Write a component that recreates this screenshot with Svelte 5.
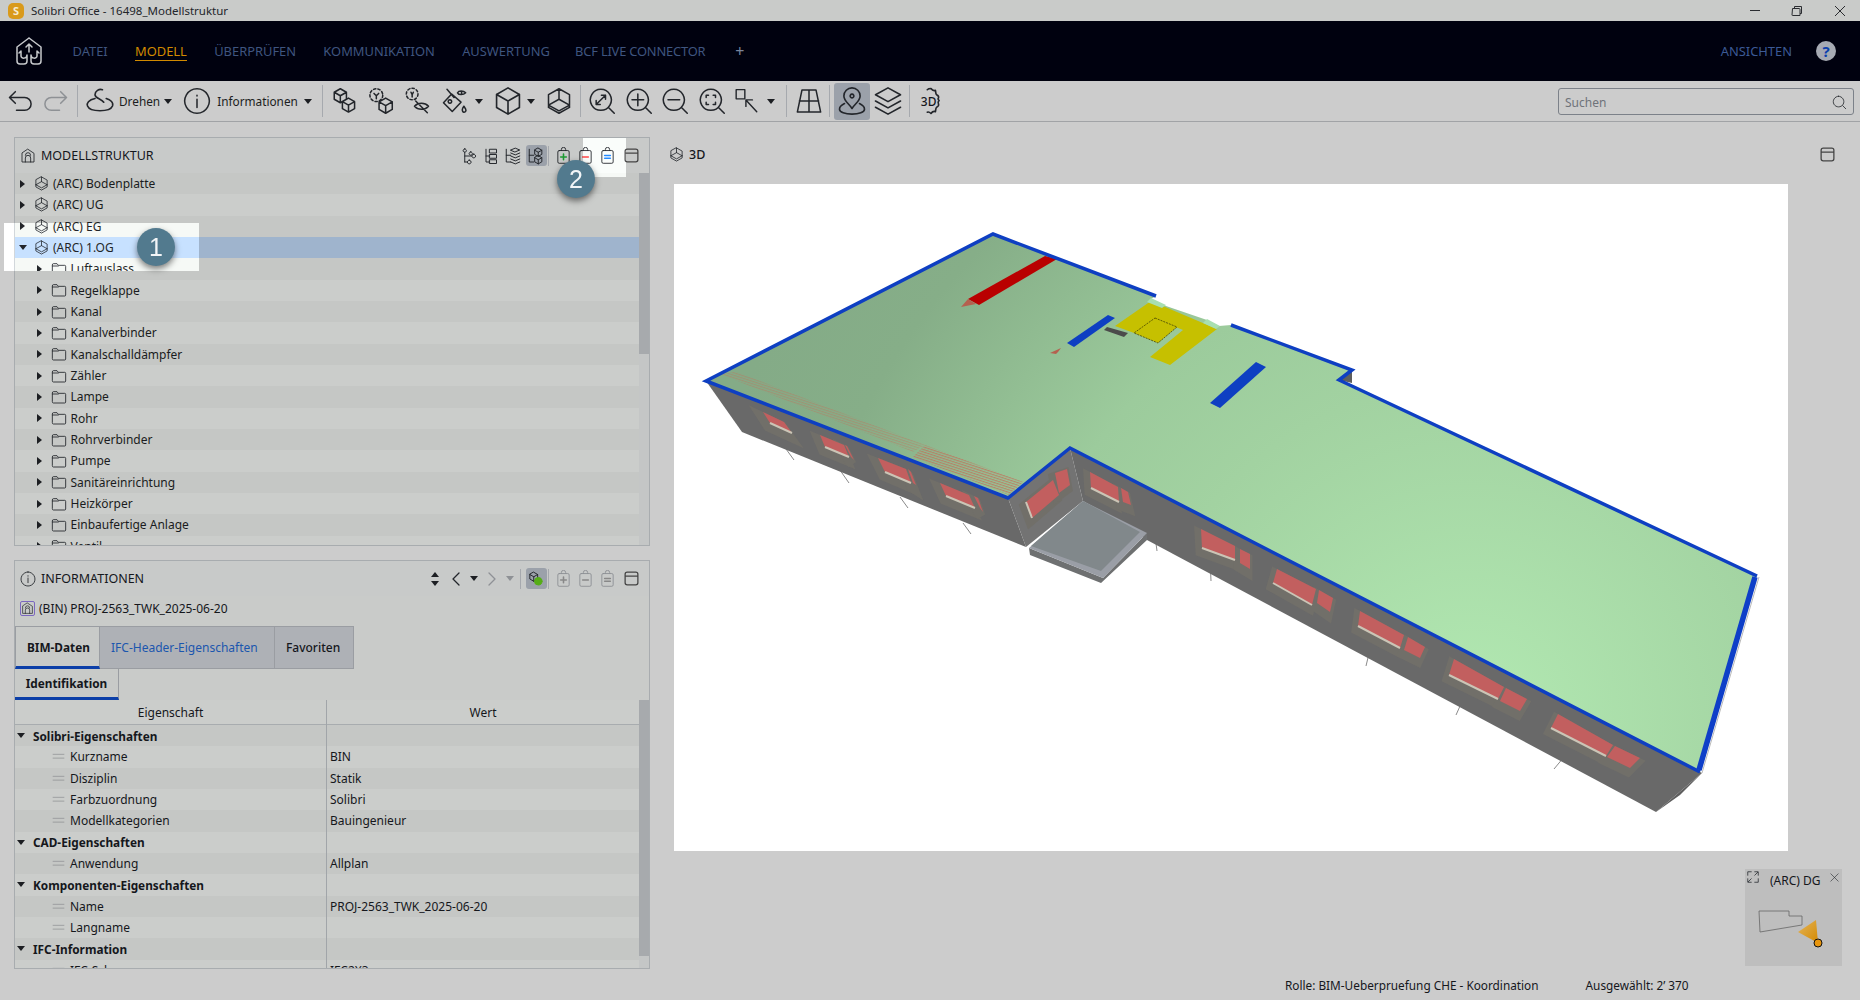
<script>
  const nav = ['DATEI', 'MODELL', 'ÜBERPRÜFEN', 'KOMMUNIKATION', 'AUSWERTUNG', 'BCF LIVE CONNECTOR'];
  const roots = ['(ARC) Bodenplatte', '(ARC) UG', '(ARC) EG', '(ARC) 1.OG'];
  const folders = ['Luftauslass', 'Regelklappe', 'Kanal', 'Kanalverbinder', 'Kanalschalldämpfer', 'Zähler', 'Lampe', 'Rohr', 'Rohrverbinder', 'Pumpe', 'Sanitäreinrichtung', 'Heizkörper', 'Einbaufertige Anlage', 'Ventil'];
  const props = [
    { group: 'Solibri-Eigenschaften' },
    { k: 'Kurzname', v: 'BIN' },
    { k: 'Disziplin', v: 'Statik' },
    { k: 'Farbzuordnung', v: 'Solibri' },
    { k: 'Modellkategorien', v: 'Bauingenieur' },
    { group: 'CAD-Eigenschaften' },
    { k: 'Anwendung', v: 'Allplan' },
    { group: 'Komponenten-Eigenschaften' },
    { k: 'Name', v: 'PROJ-2563_TWK_2025-06-20' },
    { k: 'Langname', v: '' },
    { group: 'IFC-Information' },
    { k: 'IFC-Schema', v: 'IFC2X3' }
  ];

  const cube = (x, y, r) => {
    const w = r * 0.87, h = r / 2;
    return `M${x} ${y - r}L${x + w} ${y - h}V${y + h}L${x} ${y + r}L${x - w} ${y + h}V${y - h}ZM${x - w} ${y - h}L${x} ${y}L${x + w} ${y - h}M${x} ${y}V${y + r}`;
  };
  const lens = 'M18 18L22.5 22.5M11 2a9 9 0 1 0 .01 0Z';

  const icons = {
    undo: 'M8 4L3 9L8 14M3 9H16a5.5 5.5 0 0 1 0 11H9',
    redo: 'M16 4L21 9L16 14M21 9H8a5.5 5.5 0 0 0 0 11H15',
    rotate: 'M14 3a4.5 4.5 0 0 0-6 4c0 3 5 3 7 6M8 10C3 11 1 14 2 16c2 5 18 5 20 0 1-3-2-5-5-6',
    cubes: cube(8, 7.5, 6) + cube(15, 15.5, 6),
    cube1: cube(16, 16, 6.5) + 'M6 5.5L8 7.5L10 5.5M8 7.5V10',
    cube: cube(12, 12, 10.5),
    hull: 'M12 1.5L21 6.5V17.5L12 22.5L3 17.5V6.5ZM3 15.5L12 10.5L21 15.5M3 15.5L12 20.5L21 15.5M12 1.5V10.5',
    bucket: 'M10 6L18 13L10.5 21L3 13.5ZM6 2L12 9M8.500 11a1.500 1.500 0 1 0 .01 0ZM20.500 16.500c-1.500 2-2 3-1 4.500s3.500 0 2.500-2ZM15 5c1-2 5-2 7 0c-2 2-6 2-7 0ZM18.500 4.500V5.500',
    eyeoff: 'M6 4.500L7 6.500L8 4.500M7 6.500V8.500M9 16.500c3-3.500 9-3.500 12 0c-3 3.500-9 3.500-12 0ZM10 12L20 22',
    fit: lens + 'M7 15L15 7M7 15V11.5M7 15H10.5M15 7V10.5M15 7H11.5',
    plus: lens + 'M6 11H16M11 6V16',
    minus: lens + 'M6 11H16',
    focus: lens + 'M7 9V7H9M13 7H15V9M15 13V15H13M9 15H7V13',
    select: 'M2 1.5H10V10H2ZM11 11L21 22M11 11V17M11 11H17',
    floor: 'M6 2.5H18L22 21.5H2ZM12 2.5V21.5M3.7 12H20.3',
    pin: 'M12 1.5a6.5 6.5 0 0 0-6.5 6.5c0 4 4 6 6.5 10c2.5-4 6.5-6 6.5-10a6.5 6.5 0 0 0-6.5-6.5ZM12 6.5a1.5 1.5 0 1 0 .01 0ZM6 14C3 15.5 2 17 2 18.5c0 2.5 4.5 4 10 4s10-1.5 10-4c0-1.5-1-3-4-4.500',
    layers: 'M12 1.500L22 7L12 12.500L2 7ZM2 12L12 17.500L22 12M2 17L12 22.500L22 17',
    gear: 'M9 3c1-1 2-1 3-1c1 1.500 2 2 3.500 1.500c.5 1.500 0 2.500 1 3.500c1 .5 2 1 1.500 2.500c-.5 .5-.5 1.500.5 2c-1 1-1 2-.5 3c.5 1.500-.5 2-1.500 2.500c-1 1-.5 2-1 3.500c-1.500-.5-2.500 0-3.500 1.500c-1-1-2-1.500-3-1',
    win: 'M3 6a3 3 0 0 1 3-3H18a3 3 0 0 1 3 3V18a3 3 0 0 1-3 3H6a3 3 0 0 1-3-3ZM3 8.500H21',
    info: 'M12 1.500a10.500 10.500 0 1 0 .01 0ZM12 10.500V17.500M12 7V7.800',
    house: 'M12 2L21 8V21H3V8ZM8 21V15a4 4 0 0 1 8 0V21M8 11a4 4 0 0 1 8 0',
    model: 'M12 1.500L21 6.500V17.500L12 22.500L3 17.500V6.500ZM3 14L12 9L21 14M3 14L12 19L21 14M12 1.500V9',
    folder: 'M2 5.500a1.500 1.500 0 0 1 1.500-1.500H9L11 6.500H20.500A1.500 1.500 0 0 1 22 8V19.500A1.500 1.500 0 0 1 20.500 21H3.500A1.500 1.500 0 0 1 2 19.500ZM2 7.500H11',
    treeA: 'M5 2.500a2.200 2.200 0 1 0 .01 0ZM5 7V20M5 12H14M5 20H8M17 9.500a2.500 2.500 0 1 0 .01 0ZM11 17.500a2.500 2.500 0 1 0 .01 0ZM13 6.500a2.200 2.200 0 1 0 .01 0Z',
    treeB: 'M9 3H18V8H9ZM9 10H18V15H9ZM9 17H18V22H9ZM4 3V20H9M4 12H9',
    treeC: 'M9 4L15 1.500L21 4L15 6.500ZM9 8L15 10.500L21 8M9 12L15 14.500L21 12M9 16L15 18.500L21 16M9 20L15 22.500L21 20M3 3V20H9M3 11H9',
    treeD: 'M3 3V20H9M3 11H9' + cube(15, 7, 5.500) + cube(15, 17, 5.500),
    clip: 'M6 5H18a2 2 0 0 1 2 2V21a2 2 0 0 1-2 2H6a2 2 0 0 1-2-2V7a2 2 0 0 1 2-2ZM9 5V3.500a3 3 0 0 1 6 0V5',
    expand: 'M3 9V3H9M15 3H21V9M3 15V21H9M15 21H21V15M15 9L20 4M9 15L4 20',
    close: 'M4 4L20 20M20 4L4 20',
    search: 'M17 17L22 22M10.500 2a8.500 8.500 0 1 0 .01 0Z',
    lines: 'M2 8H22M2 15H22'
  };

  // 3D model, in the coordinates of the whole window
  const windows = [
    { p: '763,412 784,422 792,433 770,423' },
    { p: '820,435 844,445 849,457 825,447', s: '845,445 847,446 854,460 851,457' },
    { p: '878,458 906,469 911,483 885,472', s: '908,469 911,472 916,485 913,483' },
    { p: '940,483 969,495 975,508 946,496', s: '974,496 978,498 983,512 980,508' },
    { p: '1053,480 1059,495 1032,518 1026,502', s: '1067,469 1070,485 1059,493 1055,473' },
    { p: '1090,472 1118,487 1119,502 1091,488', s: '1121,488 1128,492 1131,505 1123,502' },
    { p: '1201,529 1235,546 1235,560 1202,548', s: '1240,549 1250,554 1250,569 1240,563' },
    { p: '1277,569 1316,589 1312,605 1273,583', s: '1319,590 1333,598 1330,612 1317,603' },
    { p: '1360,611 1404,635 1400,648 1358,626', s: '1408,637 1425,647 1420,658 1404,650' },
    { p: '1454,659 1504,687 1498,699 1449,675', s: '1506,688 1527,699 1520,711 1500,701' },
    { p: '1558,714 1613,745 1606,756 1551,728', s: '1615,746 1640,758 1630,768 1607,757' }
  ];
  const legs = [
    [778, 438, 794, 460], [835, 463, 849, 483], [900, 497, 908, 508], [963, 523, 971, 534],
    [1154, 528, 1157, 551], [1210, 558, 1211, 581], [1371, 645, 1366, 666], [1465, 695, 1456, 715], [1569, 751, 1554, 769]
  ];
  const roof = '993,234 1156,296 1151,299 1166,306 1207,320 1219,326 1231,325 1352,370 1339,380 1757,576 1700,772 1070,448 1008,498 706,381';
</script>

{#snippet ic(name, size = 24, cls = '')}
  <svg class="ic {cls}" width={size} height={size} viewBox="0 0 24 24"><path d={icons[name]} /></svg>
{/snippet}

{#snippet sep()}<span class="sep"></span>{/snippet}
{#snippet caret(cls = '')}<span class="caret {cls}"></span>{/snippet}

{#snippet clip(color, sym, dim = false)}
  <svg class="ic clip" class:dim width="17" height="17" viewBox="0 0 24 24">
    <path d={icons.clip} />
    <path d={sym} style="stroke:{color};stroke-width:2.2" />
  </svg>
{/snippet}

<div class="app">
  <header class="title">
    <span class="logo">S</span>
    <span class="title-text">Solibri Office - 16498_Modellstruktur</span>
    <div class="win-btns">
      <span class="min"></span>
      <svg width="12" height="12" viewBox="0 0 12 12"><path d="M1.500 3.500h6.500a1 1 0 0 1 1 1v6h-7.500a.5.500 0 0 1-.5-.5ZM3.500 3.500V1.500h7v7h-1.500" /></svg>
      <svg width="12" height="12" viewBox="0 0 12 12"><path d="M1 1L11 11M11 1L1 11" /></svg>
    </div>
  </header>

  <nav class="nav">
    <svg class="brand" width="28" height="30" viewBox="0 0 28 30">
      <path d="M14 2L26 11V25a3 3 0 0 1-3 3H19a3 3 0 0 1-3-3V19M14 2L2 11V25a3 3 0 0 0 3 3H9a3 3 0 0 0 3-3V19M14 16V8M11 11L14 8L17 11M6 20V15M4 17L6 15M22 20V15M24 17L22 15M6 20c0 3 6 3 6 -1M22 20c0 3-6 3-6-1" />
    </svg>
    {#each nav as item}
      <span class="nav-item" class:active={item === 'MODELL'} class:tight={item.startsWith('BCF')}>{item}</span>
    {/each}
    <span class="nav-plus">+</span>
    <span class="nav-right">ANSICHTEN</span>
    <span class="help">?</span>
  </nav>

  <div class="toolbar">
    <span class="tb">{@render ic('undo', 28)}</span>
    <span class="tb">{@render ic('redo', 28, 'dim')}</span>
    {@render sep()}
    <span class="tb labelled">{@render ic('rotate', 30)}<span>Drehen</span>{@render caret()}</span>
    <span class="tb labelled info-btn">{@render ic('info', 28)}<span>Informationen</span>{@render caret()}</span>
    {@render sep()}
    <span class="tb">{@render ic('cubes', 28)}</span>
    <span class="tb">
      <svg class="ic" width="28" height="28" viewBox="0 0 24 24"><path d={icons.cube1} /><circle cx="8" cy="7" r="5.500" stroke-dasharray="2 1.800" /></svg>
    </span>
    <span class="tb">
      <svg class="ic" width="28" height="28" viewBox="0 0 24 24"><circle cx="7" cy="6" r="5" stroke-dasharray="2 1.800" /><path d={icons.eyeoff} /></svg>
    </span>
    <span class="tb withcaret w54">{@render ic('bucket', 28)}{@render caret()}</span>
    <span class="tb withcaret">{@render ic('cube', 30)}{@render caret()}</span>
    <span class="tb">{@render ic('hull', 28)}</span>
    {@render sep()}
    <span class="tb">{@render ic('fit', 28)}</span>
    <span class="tb">{@render ic('plus', 28)}</span>
    <span class="tb">{@render ic('minus', 28)}</span>
    <span class="tb">{@render ic('focus', 28)}</span>
    <span class="tb withcaret w54">{@render ic('select', 26)}{@render caret()}</span>
    {@render sep()}
    <span class="tb">{@render ic('floor', 28)}</span>
    {@render sep()}
    <span class="tb on">{@render ic('pin', 30)}</span>
    <span class="tb">{@render ic('layers', 30)}</span>
    {@render sep()}
    <span class="tb gear">
      {@render ic('gear', 30)}
      <b>3D</b>
    </span>
    <label class="search">
      <span>Suchen</span>
      {@render ic('search', 15)}
    </label>
  </div>

  <main class="main">
    <section class="left">
      <div class="panel">
        <div class="panel-head">
          {@render ic('house', 16)}
          <span class="panel-title">MODELLSTRUKTUR</span>
          <div class="head-tools">
            {@render ic('treeA', 18, 'tree')}
            {@render ic('treeB', 18, 'tree')}
            {@render ic('treeC', 18, 'tree')}
            <span class="on-small">{@render ic('treeD', 18)}</span>
            <i class="vsep"></i>
            {@render clip('#1d9a32', 'M12 10V18M8 14H16')}
            {@render clip('#d33a3a', 'M8 14H16')}
            {@render clip('#1d6fd0', 'M8 12H16M8 16H16')}
            <span class="winwrap">{@render ic('win', 17)}</span>
          </div>
        </div>
        <div class="scrollwrap">
          <div class="rows">
            {#each roots as r, i}
              <div class="row" class:sel={i === 3}>
                <span class="tw" class:open={i === 3}></span>
                {@render ic('model', 15)}
                <span class="label">{r}</span>
              </div>
            {/each}
            {#each folders as f}
              <div class="row sub">
                <span class="tw"></span>
                {@render ic('folder', 16)}
                <span class="label">{f}</span>
              </div>
            {/each}
          </div>
          <div class="scrollbar tree-sb"></div>
        </div>
      </div>

      <div class="panel">
        <div class="panel-head">
          {@render ic('info', 16)}
          <span class="panel-title">INFORMATIONEN</span>
          <div class="head-tools">
            <div class="pager">
              <span class="updown"></span>
              <svg class="ic" width="14" height="16" viewBox="0 0 14 16"><path d="M10 2L4 8L10 14" /></svg>
              {@render caret()}
              <svg class="ic dim" width="14" height="16" viewBox="0 0 14 16"><path d="M4 2L10 8L4 14" /></svg>
              {@render caret('dimcaret')}
            </div>
            <i class="vsep first"></i>
            <span class="on-small dot">
              <svg class="ic" width="18" height="18" viewBox="0 0 24 24"><path d={cube(9, 9, 6)} /><circle class="green" cx="15" cy="15" r="5" /></svg>
            </span>
            <i class="vsep"></i>
            {@render clip('#888', 'M12 10V18M8 14H16', true)}
            {@render clip('#888', 'M8 14H16', true)}
            {@render clip('#888', 'M8 12H16M8 16H16', true)}
            <span class="winwrap">{@render ic('win', 17)}</span>
          </div>
        </div>
        <div class="subject">
          <span class="subject-ic">{@render ic('house', 13)}</span>
          (BIN) PROJ-2563_TWK_2025-06-20
        </div>
        <div class="tabs">
          <span class="tab active">BIM-Daten</span>
          <span class="tab link">IFC-Header-Eigenschaften</span>
          <span class="tab fav">Favoriten</span>
        </div>
        <div class="subtabs"><span class="subtab">Identifikation</span></div>
        <div class="scrollwrap">
          <div class="table">
            <div class="thead"><span>Eigenschaft</span><span>Wert</span></div>
            {#each props as p}
              <div class="row trow" class:groupr={p.group}>
                {#if p.group}
                  <span class="cell key"><span class="tw open"></span><b>{p.group}</b></span>
                  <span class="cell"></span>
                {:else}
                  <span class="cell key">{@render ic('lines', 13, 'eq')}{p.k}</span>
                  <span class="cell val">{p.v}</span>
                {/if}
              </div>
            {/each}
          </div>
          <div class="scrollbar prop-sb"></div>
        </div>
      </div>
    </section>

    <section class="right">
      <div class="view-head">
        {@render ic('model', 15)}
        <span>3D</span>
        <span class="winwrap">{@render ic('win', 17)}</span>
      </div>
      <div class="canvas">
        <svg width="1114" height="667" viewBox="674 184 1114 667">
          <defs>
            <radialGradient id="roofg" gradientUnits="userSpaceOnUse" cx="1470" cy="720" r="800">
              <stop offset="0" stop-color="#b2e9b2" />
              <stop offset="0.42" stop-color="#a2d2a1" />
              <stop offset="0.58" stop-color="#9ccb9c" />
              <stop offset="0.85" stop-color="#86ae88" />
              <stop offset="1" stop-color="#84ab87" />
            </radialGradient>
            <pattern id="hatch" width="6" height="2.400" patternUnits="userSpaceOnUse" patternTransform="rotate(18)">
              <rect width="6" height="1.100" fill="#c2705a" />
            </pattern>
          </defs>

          {#each legs as [x1, y1, x2, y2]}
            <line class="leg" {x1} {y1} {x2} {y2} />
          {/each}
          <polygon class="wall" points="706,381 1008,498 1026,547 742,432" />
          <polygon class="wall2" points="1008,498 1070,448 1083,501 1026,547" />
          <polygon class="wall" points="1070,448 1702,773 1656,812 1147,540 1083,501" />
          <polygon class="wall-lo" points="1680,795 1702,773 1656,812" />
          <polygon class="wall-lo" points="1339,380 1352,370 1352,383" />

          <polygon points="1029,548 1030,555 1101,583 1147,540 1147,533 1103,578" fill="#6e7071" />
          <polygon points="1029,548 1083,501 1147,533 1103,578" fill="#9a9ea6" />
          <polygon points="1031,546 1083,501 1140,532 1101,571" fill="#81888b" />

          {#each windows as w}
            <polygon class="frame" points={w.p} transform="translate(-2 4)" />
            {#if w.s}<polygon class="frame" points={w.s} transform="translate(-2 4)" />{/if}
          {/each}
          {#each windows as w}
            <polygon class="pane" points={w.p} />
            {#if w.s}<polygon class="pane" points={w.s} />{/if}
            <polyline class="sill" points={w.p.split(' ').slice(2).reverse().join(' ')} />
          {/each}

          <polygon points={roof} fill="url(#roofg)" />
          <polygon points="718,373 737,372 925,445 913,452" fill="url(#hatch)" opacity="0.4" />
          <polygon points="925,445 1023,482 1009,495 913,457" fill="url(#hatch)" opacity="0.75" />

          <polygon points="1045,256 1057,259 979,305 968,299" fill="#b90000" />
          <polygon points="968,299 976,304 961,307" fill="#b5604f" />
          <polygon points="1050,353 1061,348 1058,352 1056,354" fill="#b5604f" />
          <polygon points="1108,315 1115,318 1074,347 1067,343" fill="#0e3fc2" />
          <polygon points="1256,362 1266,367 1220,408 1210,403" fill="#0e3fc2" />
          <polygon points="1151,301 1217,329 1170,365 1150,357 1183,330 1159,320 1134,333 1115,326" fill="#c6c000" />
          <polygon points="1155,318 1177,327 1158,343 1134,333" fill="#c6c000" stroke="#343400" stroke-width="0.700" stroke-dasharray="2 1" />
          <polygon points="1107,327 1128,333 1124,337 1104,330" fill="#4b4b4b" />
          <polygon points="1151,298 1166,305 1162,308 1147,302" fill="#a8dfb0" />
          <polygon points="1207,319 1220,326 1216,329 1203,323" fill="#a8dfb0" />

          <line x1="1759" y1="577" x2="1702" y2="773" stroke="#b9b9b9" stroke-width="1" />
          <polyline class="edge" points="1757,576 1339,380 1352,370 1231,325" />
          <polyline class="edge" points="1156,296 993,234 706,381 1008,498 1070,448 1700,772" />
          <line x1="1755" y1="577" x2="1699" y2="770" stroke="#0e3fc8" stroke-width="5.500" />
        </svg>
      </div>
      <footer class="status">
        <span>Rolle: BIM-Ueberpruefung CHE - Koordination</span>
        <span>Ausgewählt: 2’ 370</span>
      </footer>
    </section>
  </main>

  <!-- tutorial highlights: lift the dimming of the screenshot -->
  <div class="hl hl1"></div>
  <div class="hl hl2"></div>
  <div class="badge b1">1</div>
  <div class="badge b2">2</div>

  <aside class="minimap">
    <div class="mini-head">
      {@render ic('expand', 14)}
      <span>(ARC) DG</span>
      {@render ic('close', 11)}
    </div>
    <svg width="96" height="66" viewBox="1745 899 96 66">
      <defs>
        <linearGradient id="cone" x1="1" y1="1" x2="0" y2="0">
          <stop offset="0" stop-color="#d58a00" />
          <stop offset="1" stop-color="#e2b45c" />
        </linearGradient>
      </defs>
      <polygon points="1759,911 1789,911 1789,916 1802,916 1802,925 1760,932" fill="none" stroke="#666" stroke-width="0.800" />
      <polygon points="1818,943 1798,932 1816,920" fill="url(#cone)" />
      <circle cx="1818" cy="943" r="4" fill="#e8960e" stroke="#111" stroke-width="1" />
    </svg>
  </aside>
</div>

<style>
  :global(body) { margin: 0; }
  .app {
    position: relative;
    width: 1860px;
    height: 1000px;
    overflow: hidden;
    display: flex;
    flex-direction: column;
    background: #cccccc;
    color: #15171c;
    font-family: "Noto Sans", sans-serif;
    font-size: 12px;
  }
  .ic { fill: none; stroke: #23262b; stroke-width: 1.300; stroke-linejoin: round; stroke-linecap: round; flex: none; display: block; }
  .ic.dim { stroke: #8e9195; }

  .title { height: 21px; display: flex; align-items: center; background: #c9cbc9; padding-left: 8px; }
  .logo {
    width: 16px; height: 16px; border-radius: 5px; background: #d99a1b; color: #f6ecd2;
    font-size: 11px; font-weight: 700; display: flex; align-items: center; justify-content: center;
  }
  .title-text { margin-left: 7px; color: #22252a; font-size: 11.500px; }
  .win-btns { margin-left: auto; display: flex; align-items: center; gap: 31px; padding-right: 14px; }
  .win-btns svg { fill: none; stroke: #2a2c30; stroke-width: 1; }
  .min { width: 10px; height: 1px; background: #2a2c30; }

  .nav { height: 60px; background: #00010f; display: flex; align-items: center; padding-left: 15px; color: #3f557f; font-size: 12.900px; }
  .brand { fill: none; stroke: #c6c9cc; stroke-width: 1.500; stroke-linejoin: round; stroke-linecap: round; margin-right: 29.500px; }
  .nav-item { margin-right: 27.300px; padding: 1px 0 0; height: 20px; box-sizing: border-box; line-height: 18px; }
  .nav-item.active { color: #d18a00; border-bottom: 1px solid #d18a00; }
  .nav-item.tight { margin-left: -2px; letter-spacing: -0.2px; }
  .nav-plus { margin-left: 2.500px; font-size: 16px; color: #7a859c; }
  .nav-right { margin-left: auto; margin-right: 24px; color: #3c5a96; }
  .help {
    width: 20px; height: 20px; border-radius: 50%; background: #a6aab3; color: #0b3fae; margin-right: 24px;
    font-weight: 700; font-size: 15px; display: flex; align-items: center; justify-content: center;
  }

  .toolbar { height: 41px; box-sizing: border-box; border-bottom: 1px solid #a1a3a6; display: flex; align-items: center; padding: 0 0 0 1.500px; position: relative; }
  .tb { display: flex; align-items: center; justify-content: center; width: 36.500px; height: 37px; flex: none; }
  .tb.labelled { width: auto; gap: 4px; padding: 0 4px 0 4px; color: #1b1d21; font-size: 11.800px; }
  .tb.info-btn { margin-left: 3px; gap: 6px; padding-right: 8px; }
  .tb.withcaret { width: 51px; gap: 4px; justify-content: flex-start; padding-left: 3px; box-sizing: border-box; }
  .tb.w54 { width: 54px; padding-left: 4px; gap: 7px; }
  .tb.on { background: #9ba1aa; border-radius: 3px; width: 36px; margin-left: 0.500px; }
  .gear { position: relative; }
  .gear b { position: absolute; left: 8px; top: 10px; font-size: 12px; font-weight: 500; }
  .sep { width: 1px; height: 32px; background: #a6a9ae; margin: 0 3px 0 2.500px; flex: none; }
  .caret { width: 0; height: 0; border: 4px solid transparent; border-top: 5px solid #1c1e22; border-bottom: 0; flex: none; }
  .caret.dimcaret { border-top-color: #8e9195; }
  .search {
    position: absolute; left: 1558px; top: 7px; width: 296px; height: 27px; box-sizing: border-box;
    border: 1px solid #7c8189; border-radius: 3px; display: flex; align-items: center; justify-content: space-between;
    padding: 1px 6px 0; color: #6f737a; font-size: 12px;
  }

  .main { flex: 1; display: flex; min-height: 0; }
  .left { width: 674px; flex: none; box-sizing: border-box; padding: 15px 24px 0 14px; display: flex; flex-direction: column; gap: 14px; }
  .panel { height: 409px; box-sizing: border-box; border: 1px solid #a8acaf; display: flex; flex-direction: column; overflow: hidden; flex: none; background: #c9cbc9; }
  .panel-head { height: 35px; flex: none; display: flex; align-items: center; padding-left: 5px; background: #c8cac9; }
  .panel-title { margin-left: 5px; font-size: 12.500px; }
  .head-tools { margin-left: auto; display: flex; align-items: center; gap: 1px; padding-right: 9px; }
  .head-tools :global(.tree) { margin: 0 1.250px; }
  .on-small { width: 21px; height: 21px; background: #9ba1aa; border-radius: 3px; display: flex; align-items: center; justify-content: center; margin-left: 1px; }
  .vsep { width: 1px; height: 20px; background: #a6a9ae; margin-right: 3.500px; }
  .vsep.first { margin-right: 3px; }
  .clip { margin: 0 2px; }
  .clip.dim { stroke: #8e9195; }
  .winwrap { display: block; margin-left: 4px; }
  .winwrap .ic { stroke: #444; stroke-width: 1.800; }
  .pager { display: flex; align-items: center; gap: 7px; margin-right: 5px; }
  .updown { width: 8px; height: 14px; margin-right: 3px; position: relative; }
  .updown::before, .updown::after { content: ""; position: absolute; left: 0; border: 4px solid transparent; }
  .updown::before { top: 0; border-bottom: 5px solid #1c1e22; border-top: 0; }
  .updown::after { bottom: 0; border-top: 5px solid #1c1e22; border-bottom: 0; }
  .green { fill: #55ad17; stroke: #55ad17; }

  .scrollwrap { flex: 1; display: flex; min-height: 0; }
  .rows, .table { flex: 1; min-width: 0; overflow: hidden; }
  .scrollbar { width: 10px; flex: none; background: #c4c6c6; position: relative; }
  .scrollbar::before { content: ""; position: absolute; left: 0; right: 0; top: 0; background: #a7aaad; }
  .tree-sb::before { height: 181px; }
  .prop-sb::before { height: 256px; }

  .row { height: 21.330px; display: flex; align-items: center; box-sizing: border-box; padding-left: 4px; background: #cbcdcb; }
  .row:nth-child(odd) { background: #c5c7c5; }
  .row.sel, .row.sel:nth-child(odd) { background: #9fb4cd; }
  .row .ic { margin-right: 4.500px; }
  .label { font-size: 12px; color: #1a1c20; white-space: nowrap; }
  .row.sub { padding-left: 21px; }
  .row.sub .ic { margin-right: 4px; }
  .tw { width: 0; height: 0; border-left: 5px solid #1c1e22; border-top: 4px solid transparent; border-bottom: 4px solid transparent; flex: none; }
  .row .tw { margin-left: 1px; margin-right: 8.500px; }
  .tw.open { border-top: 5px solid #1c1e22; border-left: 4px solid transparent; border-right: 4px solid transparent; border-bottom: 0; }
  .row .tw.open { margin-left: 0; margin-right: 6.500px; }

  .subject { height: 25px; display: flex; align-items: center; gap: 4px; padding: 0 0 0 5px; flex: none; font-size: 12px; }
  .subject-ic { border: 1px solid #7b67c0; border-radius: 2px; display: block; }
  .subject-ic .ic { margin: 0; }
  .tabs { display: flex; height: 43px; flex: none; margin-top: 5px; }
  .tab { box-sizing: border-box; display: flex; align-items: center; background: #aeb1b6; border: 1px solid #9a9da2; border-left: 0; font-size: 12px; white-space: nowrap; }
  .tab.active { width: 85px; padding: 0 0 0 11px; background: #c8cac8; font-weight: 700; font-size: 11.800px; border-bottom: 3px solid #0c3fa8; border-left: 1px solid #9a9da2; }
  .tab.link { width: 175px; padding: 0 11px; color: #1b56ae; }
  .tab.fav { width: 79px; padding: 0 11px; font-weight: 500; }
  .subtabs { height: 31px; flex: none; display: flex; }
  .subtab { width: 104px; box-sizing: border-box; display: flex; align-items: center; justify-content: center; font-weight: 700; border-right: 1px solid #9a9da2; border-bottom: 3px solid #0c3fa8; background: #c8cac8; font-size: 11.800px; }

  .thead { height: 25px; display: grid; grid-template-columns: 311px 1fr; box-sizing: border-box; border-bottom: 1px solid #a8acaf; background: #cbcdcb; }
  .thead span { text-align: center; line-height: 26px; }
  .thead span + span { border-left: 1px solid #a1a5a9; }
  .trow { display: grid; grid-template-columns: 311px 1fr; padding-left: 0; }
  .trow:nth-child(odd) { background: #cbcdcb; }
  .trow:nth-child(even) { background: #c5c7c5; }
  .cell { display: flex; align-items: center; height: 100%; white-space: nowrap; }
  .cell + .cell { border-left: 1px solid #a1a5a9; padding-left: 3px; }
  .key { padding-left: 2px; }
  .key b { font-weight: 700; font-size: 11.800px; }
  .key .tw.open { margin-left: 0; margin-right: 8px; }
  .key :global(.eq) { margin-left: 35px; margin-right: 5px; stroke: #8b8d90; }

  .right { flex: 1; display: flex; flex-direction: column; min-width: 0; }
  .view-head { height: 62px; box-sizing: border-box; display: flex; align-items: center; gap: 5px; padding-top: 2px; margin-left: -5px; font-size: 12.500px; font-weight: 500; }
  .view-head .winwrap { margin-left: auto; margin-right: 24px; }
  .canvas { width: 1114px; height: 667px; background: #fff; flex: none; }
  .canvas svg { display: block; }
  .wall { fill: #696969; }
  .wall2 { fill: #737373; }
  .wall-lo { fill: #5e5e5e; }
  .frame { fill: #716f69; stroke: #716f69; stroke-width: 9; stroke-linejoin: miter; }
  .pane { fill: #c25f5f; }
  .sill { fill: none; stroke: #cbc5b6; stroke-width: 2; }
  .leg { stroke: #8a8a8a; stroke-width: 1; }
  .edge { fill: none; stroke: #0e3fc2; stroke-width: 3.500; stroke-linejoin: miter; }

  .status { flex: 1; display: flex; align-items: flex-end; gap: 47px; padding: 0 0 7px 611px; font-size: 11.800px; white-space: nowrap; }

  .hl { position: absolute; backdrop-filter: brightness(1.25); }
  .hl1 { left: 4px; top: 223px; width: 195px; height: 48px; }
  .hl1::after { content: ""; position: absolute; left: 11px; right: 0; top: 100%; height: 6px; background: #c5c7c5; }
  .hl2 { left: 583px; top: 138px; width: 43px; height: 39px; }
  .badge {
    position: absolute; width: 38px; height: 38px; border-radius: 50%; background: #527a8e; color: #f2f5f7;
    display: flex; align-items: center; justify-content: center; font-size: 25px; box-shadow: 0 3px 6px rgba(0, 0, 0, 0.5);
    font-family: "Liberation Sans", sans-serif;
  }
  .b1 { left: 137px; top: 228px; }
  .b2 { left: 557px; top: 160px; }

  .minimap { position: absolute; left: 1745px; top: 869px; width: 97px; height: 97px; background: #bebebe; }
  .mini-head { height: 22px; display: flex; align-items: center; padding-right: 2px; margin-left: 1px; font-size: 12px; }
  .mini-head span { white-space: nowrap; margin: 0 8px 0 10px; }
  .mini-head .ic { margin-top: -6px; }
  .minimap > svg { display: block; margin-top: 8px; }
</style>
